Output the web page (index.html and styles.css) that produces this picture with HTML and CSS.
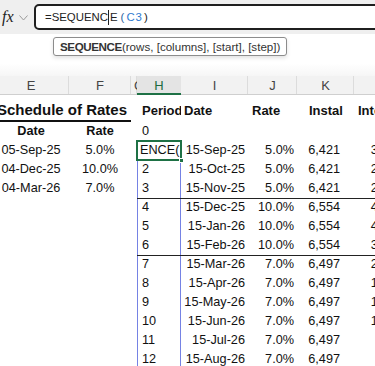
FILE: index.html
```html
<!doctype html>
<html lang="en">
<head>
    <meta charset="UTF-8">
    <title>Loan Schedule - SEQUENCE</title>
    <link rel="stylesheet" href="styles.css">
</head>
<body>
    <div class="formula-bar">
        <div class="fx">fx</div>
        <div class="fx-menu">
            <svg width="9" height="6" viewBox="0 0 9 6"><polyline points="0.5,0.5 4.5,5 8.5,0.5" fill="none" stroke="#9a9a9a" stroke-width="1"/></svg>
        </div>
        <div class="formula">
            <span>=SEQUENC</span><span class="caret"></span><span>E</span><span class="paren">(</span><span class="ref">C3</span><span class="paren-close">)</span>
        </div>
    </div>

    <div class="hint-row">
        <div class="hint"><b>SEQUENCE</b>(rows, [columns], [start], [step])</div>
    </div>

    <table class="sheet">
        <colgroup>
            <col class="w-e"><col class="w-f"><col class="w-g"><col class="w-h">
            <col class="w-i"><col class="w-j"><col class="w-k"><col class="w-l">
        </colgroup>
        <tr class="col-heads">
            <td>E</td><td>F</td><td class="g">G</td><td class="active">H</td>
            <td>I</td><td>J</td><td>K</td><td>L</td>
        </tr>
        <tr class="titles">
            <td colspan="2" class="rates-title">Schedule of Rates</td>
            <td></td>
            <td class="t-period">Period</td>
            <td class="t-date">Date</td>
            <td class="t-rate">Rate</td>
            <td class="t-instal">Instal</td>
            <td class="t-int">Interest</td>
        </tr>
        <tr class="sub">
            <td>Date</td><td>Rate</td><td></td><td class="plain">0</td>
            <td></td><td></td><td></td><td></td>
        </tr>
        <tr>
            <td>05-Sep-25</td><td>5.0%</td><td></td><td class="spill editing">ENCE(</td>
            <td>15-Sep-25</td><td>5.0%</td><td>6,421</td><td>313</td>
        </tr>
        <tr>
            <td>04-Dec-25</td><td>10.0%</td><td></td><td class="spill">2</td>
            <td>15-Oct-25</td><td>5.0%</td><td>6,421</td><td>288</td>
        </tr>
        <tr>
            <td>04-Mar-26</td><td>7.0%</td><td></td><td class="spill">3</td>
            <td>15-Nov-25</td><td>5.0%</td><td>6,421</td><td>262</td>
        </tr>
        <tr class="band">
            <td></td><td></td><td></td><td class="spill">4</td>
            <td>15-Dec-25</td><td>10.0%</td><td>6,554</td><td>471</td>
        </tr>
        <tr>
            <td></td><td></td><td></td><td class="spill">5</td>
            <td>15-Jan-26</td><td>10.0%</td><td>6,554</td><td>421</td>
        </tr>
        <tr>
            <td></td><td></td><td></td><td class="spill">6</td>
            <td>15-Feb-26</td><td>10.0%</td><td>6,554</td><td>370</td>
        </tr>
        <tr class="band">
            <td></td><td></td><td></td><td class="spill">7</td>
            <td>15-Mar-26</td><td>7.0%</td><td>6,497</td><td>230</td>
        </tr>
        <tr>
            <td></td><td></td><td></td><td class="spill">8</td>
            <td>15-Apr-26</td><td>7.0%</td><td>6,497</td><td>196</td>
        </tr>
        <tr>
            <td></td><td></td><td></td><td class="spill">9</td>
            <td>15-May-26</td><td>7.0%</td><td>6,497</td><td>163</td>
        </tr>
        <tr>
            <td></td><td></td><td></td><td class="spill">10</td>
            <td>15-Jun-26</td><td>7.0%</td><td>6,497</td><td>129</td>
        </tr>
        <tr>
            <td></td><td></td><td></td><td class="spill">11</td>
            <td>15-Jul-26</td><td>7.0%</td><td>6,497</td><td>75</td>
        </tr>
        <tr>
            <td></td><td></td><td></td><td class="spill">12</td>
            <td>15-Aug-26</td><td>7.0%</td><td>6,497</td><td>38</td>
        </tr>
    </table>
</body>
</html>
```

FILE: styles.css
```css
body {
    margin: 0;
    width: 375px;
    height: 366px;
    overflow: hidden;
    background-color: #fff;
    color: #111;
    font-family: 'Liberation Sans', Arial, sans-serif;
}

/* formula bar */
.formula-bar {
    display: flex;
    align-items: center;
    height: 34px;
    background-color: #efefef;
}
.fx {
    width: 17px;
    padding-left: 2px;
    font-family: 'Liberation Serif', serif;
    font-style: italic;
    font-size: 16px;
    color: #222;
}
.fx-menu {
    display: flex;
    width: 15px;
    padding-top: 2px;
}
.formula {
    flex: 1;
    display: flex;
    align-items: center;
    height: 22px;
    margin-right: -20px;
    padding-left: 9px;
    border: 2px solid #1f1f1f;
    border-radius: 5px;
    background-color: #fff;
    font-size: 11.4px;
    color: #222;
}
.caret {
    width: 1px;
    height: 15px;
    margin: 0 0.5px;
    background-color: #222;
}
.paren {
    margin-left: 3px;
    color: #2b5f9e;
}
.ref {
    margin: 0 1px 0 2px;
    color: #2f7bd0;
    letter-spacing: 1px;
}
.paren-close {
    color: #222;
}

/* function hint */
.hint-row {
    height: 42px;
    padding-top: 3px;
    box-sizing: border-box;
    background: linear-gradient(#fff 70%, #f6f6f6);
}
.hint {
    display: inline-block;
    margin-left: 53px;
    padding: 0 6px;
    line-height: 17px;
    border: 1px solid #8c8c8c;
    border-radius: 3px;
    background-color: #fff;
    box-shadow: 0 2px 4px rgba(0,0,0,0.12);
    font-size: 11.6px;
    color: #333;
}
.hint b {
    letter-spacing: -0.4px;
}

/* grid */
.sheet {
    border-collapse: separate;
    border-spacing: 0;
    table-layout: fixed;
    width: 421px;
    margin-left: -7px;
    font-size: 12.7px;
}
.w-e { width: 76px; }
.w-f { width: 62px; }
.w-g { width: 6px; }
.w-h { width: 44px; }
.w-i { width: 67px; }
.w-j { width: 49px; }
.w-k { width: 57px; }
.w-l { width: 60px; }
.sheet td {
    height: 19px;
    padding: 0;
    line-height: 19px;
    white-space: nowrap;
    overflow: hidden;
}
.sheet tr td:nth-child(1),
.sheet tr td:nth-child(2) { text-align: center; }
.sheet tr td:nth-child(4) { padding-left: 5px; }
.sheet tr td:nth-child(5) { text-align: right; padding-right: 3px; }
.sheet tr td:nth-child(6) { text-align: right; padding-right: 3px; }
.sheet tr td:nth-child(7) { text-align: right; padding-right: 14px; }
.sheet tr td:nth-child(8) { text-align: right; padding-right: 22px; }

.sheet tr.col-heads td {
    height: 19px;
    padding: 0;
    line-height: 18px;
    text-align: center;
    background-color: #f2f2f2;
    box-shadow: inset 0 -1px 0 #cfcfcf, inset -1px 0 0 #dcdcdc;
    color: #444;
    font-size: 13px;
}
.sheet tr.col-heads td.g {
    text-indent: 3px;
}
.sheet tr.col-heads td.active {
    background-color: #e4e4e4;
    color: #1e6b3f;
    box-shadow: inset 0 -2px 0 #1e7145;
}

.sheet tr.titles td {
    height: 24px;
    padding: 0 0 3px 0;
    line-height: 16px;
    vertical-align: bottom;
    text-align: left;
    font-weight: bold;
    font-size: 13px;
}
.sheet tr.titles td.rates-title {
    text-align: center;
    line-height: 18px;
    font-size: 15px;
    box-shadow: inset 0 -2px 0 #111;
}
.sheet tr.titles td.t-period { padding-left: 5px; }
.sheet tr.titles td.t-date { padding-left: 3px; }
.sheet tr.titles td.t-rate { padding-left: 4px; }
.sheet tr.titles td.t-instal { padding-left: 12px; }
.sheet tr.titles td.t-int { padding-left: 4px; }

.sub td:nth-child(1),
.sub td:nth-child(2) { font-weight: bold; }

.spill {
    box-shadow: inset 1px 0 0 #7582e4, inset -1px 0 0 #7582e4;
}
.band td:nth-child(n+4) {
    box-shadow: inset 0 1px 0 #222;
}
.band td.spill {
    box-shadow: inset 0 1px 0 #222, inset 1px 0 0 #7582e4, inset -1px 0 0 #7582e4;
}
.sheet tr td.editing {
    position: relative;
    overflow: visible;
    padding-left: 3px;
}
.editing::after {
    content: '';
    position: absolute;
    left: -1px;
    top: -1px;
    right: -1px;
    bottom: -1px;
    border: 2px solid #1e7145;
}
.editing::before {
    content: '';
    position: absolute;
    right: -3px;
    bottom: -3px;
    width: 5px;
    height: 5px;
    background-color: #1e7145;
    border: 1px solid #fff;
    box-sizing: border-box;
    z-index: 1;
}
```
